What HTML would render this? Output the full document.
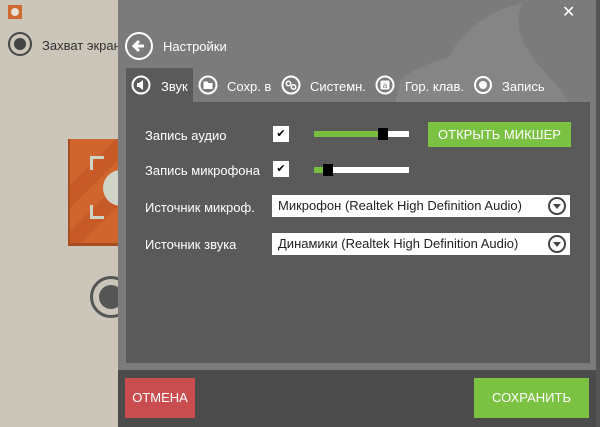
<!DOCTYPE html><html><head><meta charset="utf-8"><style>
*{margin:0;padding:0;box-sizing:border-box}
body{width:600px;height:427px;overflow:hidden;position:relative;background:#cbc5ba;font-family:"Liberation Sans","DejaVu Sans",sans-serif}
.a{position:absolute}
.t{color:#fff;font-size:13px;white-space:nowrap}
.ci{border:2px solid #fff;border-radius:50%;width:18px;height:18px}
.dd{background:#fff;color:#222;font-size:13px;padding:3px 6px;line-height:16px}
.arr{position:absolute;right:4px;top:2px;width:18px;height:18px;border:2px solid #444;border-radius:50%}
.arr:after{content:"";position:absolute;left:3px;top:5px;border-left:4px solid transparent;border-right:4px solid transparent;border-top:5px solid #444}
</style></head><body>
<div class="a" style="left:8px;top:5px;width:14px;height:14px;background:#d06a33"></div>
<div class="a" style="left:11px;top:8px;width:8px;height:8px;background:#e8e0d6;border-radius:50%"></div>
<div class="a" style="left:8px;top:32px;width:24px;height:24px;border:2px solid #444;border-radius:50%"></div>
<div class="a" style="left:14px;top:38px;width:12px;height:12px;background:#444;border-radius:50%"></div>
<div class="a" style="left:42px;top:38px;font-size:13px;color:#333">Захват экрана</div>
<div class="a" style="left:68px;top:139px;width:52px;height:107px;background:linear-gradient(135deg,#d0652e 0 30%,#c85a28 30% 45%,#d0652e 45% 60%,#c85a28 60% 75%,#d0652e 75%);border-left:2px solid #a84d20;border-bottom:3px solid #a84d20"></div>
<div class="a" style="left:90px;top:156px;width:14px;height:14px;border-left:3px solid #cfd4c6;border-top:3px solid #cfd4c6"></div>
<div class="a" style="left:90px;top:205px;width:14px;height:14px;border-left:3px solid #cfd4c6;border-bottom:3px solid #cfd4c6"></div>
<div class="a" style="left:103px;top:170px;width:36px;height:36px;border-radius:50%;background:#cfd4c6"></div>
<div class="a" style="left:90px;top:276px;width:42px;height:42px;border:3px solid #555;border-radius:50%"></div>
<div class="a" style="left:99px;top:285px;width:24px;height:24px;background:#555;border-radius:50%"></div>
<div class="a" style="left:118px;top:0;width:482px;height:370px;background:#7b7b7b"></div>
<svg class="a" style="left:0;top:0" width="600" height="110"><path d="M523 3 C490 10,462 30,448 58 C430 62,412 70,400 80 L395 105 L570 105 C560 85,540 70,528 50 C518 35,515 15,523 3 Z" fill="#858585"/></svg>
<div class="a" style="left:596px;top:0;width:4px;height:427px;background:#555"></div>
<div class="a t" style="left:562px;top:2px;font-size:16px">✕</div>
<div class="a" style="left:125px;top:32px;width:28px;height:28px;border:2px solid #fff;border-radius:50%"></div>
<svg class="a" style="left:125px;top:32px" width="28" height="28"><path d="M19 14H9M14 9L9 14L14 19" stroke="#fff" stroke-width="3" fill="none"/></svg>
<div class="a t" style="left:163px;top:39px">Настройки</div>
<div class="a" style="left:126px;top:68px;width:67px;height:35px;background:#5a5a5a"></div>
<svg class="a" style="left:131px;top:75px" width="20" height="20"><circle cx="10" cy="10" r="8.5" stroke="#fff" stroke-width="2" fill="none"/><path d="M6 8h2l4-3v10l-4-3H6z" fill="#fff"/></svg>
<div class="a t" style="left:161px;top:79px">Звук</div>
<svg class="a" style="left:198px;top:75px" width="20" height="20"><circle cx="10" cy="10" r="8.5" stroke="#fff" stroke-width="2" fill="none"/><path d="M5.5 6.5h4l1 1.5h4v6h-9z" fill="#fff"/></svg>
<div class="a t" style="left:227px;top:79px">Сохр. в</div>
<svg class="a" style="left:281px;top:75px" width="20" height="20"><circle cx="10" cy="10" r="8.5" stroke="#fff" stroke-width="2" fill="none"/><circle cx="7.5" cy="8.5" r="2.2" stroke="#fff" stroke-width="1.5" fill="none"/><circle cx="12.5" cy="12" r="2.2" stroke="#fff" stroke-width="1.5" fill="none"/></svg>
<div class="a t" style="left:310px;top:79px">Системн.</div>
<svg class="a" style="left:375px;top:75px" width="20" height="20"><circle cx="10" cy="10" r="8.5" stroke="#fff" stroke-width="2" fill="none"/><rect x="5.5" y="5.5" width="9" height="9" rx="1.5" fill="#fff"/><text x="10" y="13" font-size="8" text-anchor="middle" fill="#7b7b7b" font-family="Liberation Sans">a</text></svg>
<div class="a t" style="left:405px;top:79px">Гор. клав.</div>
<div class="a ci" style="left:474px;top:76px"></div><div class="a" style="left:479px;top:81px;width:8px;height:8px;background:#fff;border-radius:50%"></div>
<div class="a t" style="left:502px;top:79px">Запись</div>
<div class="a" style="left:126px;top:102px;width:464px;height:261px;background:#5a5a5a"></div>
<div class="a t" style="left:145px;top:128px">Запись аудио</div>
<div class="a t" style="left:145px;top:163px">Запись микрофона</div>
<div class="a t" style="left:145px;top:200px">Источник микроф.</div>
<div class="a t" style="left:145px;top:237px">Источник звука</div>
<div class="a" style="left:273px;top:126px;width:16px;height:16px;background:#fff;font-size:11px;text-align:center;line-height:16px;color:#000">✔</div>
<div class="a" style="left:273px;top:161px;width:16px;height:16px;background:#fff;font-size:11px;text-align:center;line-height:16px;color:#000">✔</div>
<div class="a" style="left:314px;top:131px;width:95px;height:6px;background:#fff"></div>
<div class="a" style="left:314px;top:131px;width:66px;height:6px;background:#78bf3d"></div>
<div class="a" style="left:378px;top:128px;width:10px;height:12px;background:#000"></div>
<div class="a" style="left:314px;top:167px;width:95px;height:6px;background:#fff"></div>
<div class="a" style="left:314px;top:167px;width:10px;height:6px;background:#78bf3d"></div>
<div class="a" style="left:323px;top:164px;width:10px;height:12px;background:#000"></div>
<div class="a t" style="left:428px;top:122px;width:143px;height:25px;background:#7cc242;text-align:center;line-height:25px;font-size:13px">ОТКРЫТЬ МИКШЕР</div>
<div class="a dd" style="left:272px;top:195px;width:298px;height:22px">Микрофон (Realtek High Definition Audio)<div class="arr"></div></div>
<div class="a dd" style="left:272px;top:233px;width:298px;height:22px">Динамики (Realtek High Definition Audio)<div class="arr"></div></div>
<div class="a" style="left:118px;top:370px;width:478px;height:57px;background:#4b4b4b"></div>
<div class="a t" style="left:125px;top:378px;width:70px;height:40px;background:#c94d4f;text-align:center;line-height:40px">ОТМЕНА</div>
<div class="a t" style="left:474px;top:378px;width:115px;height:40px;background:#7cc242;text-align:center;line-height:40px">СОХРАНИТЬ</div>
</body></html>
